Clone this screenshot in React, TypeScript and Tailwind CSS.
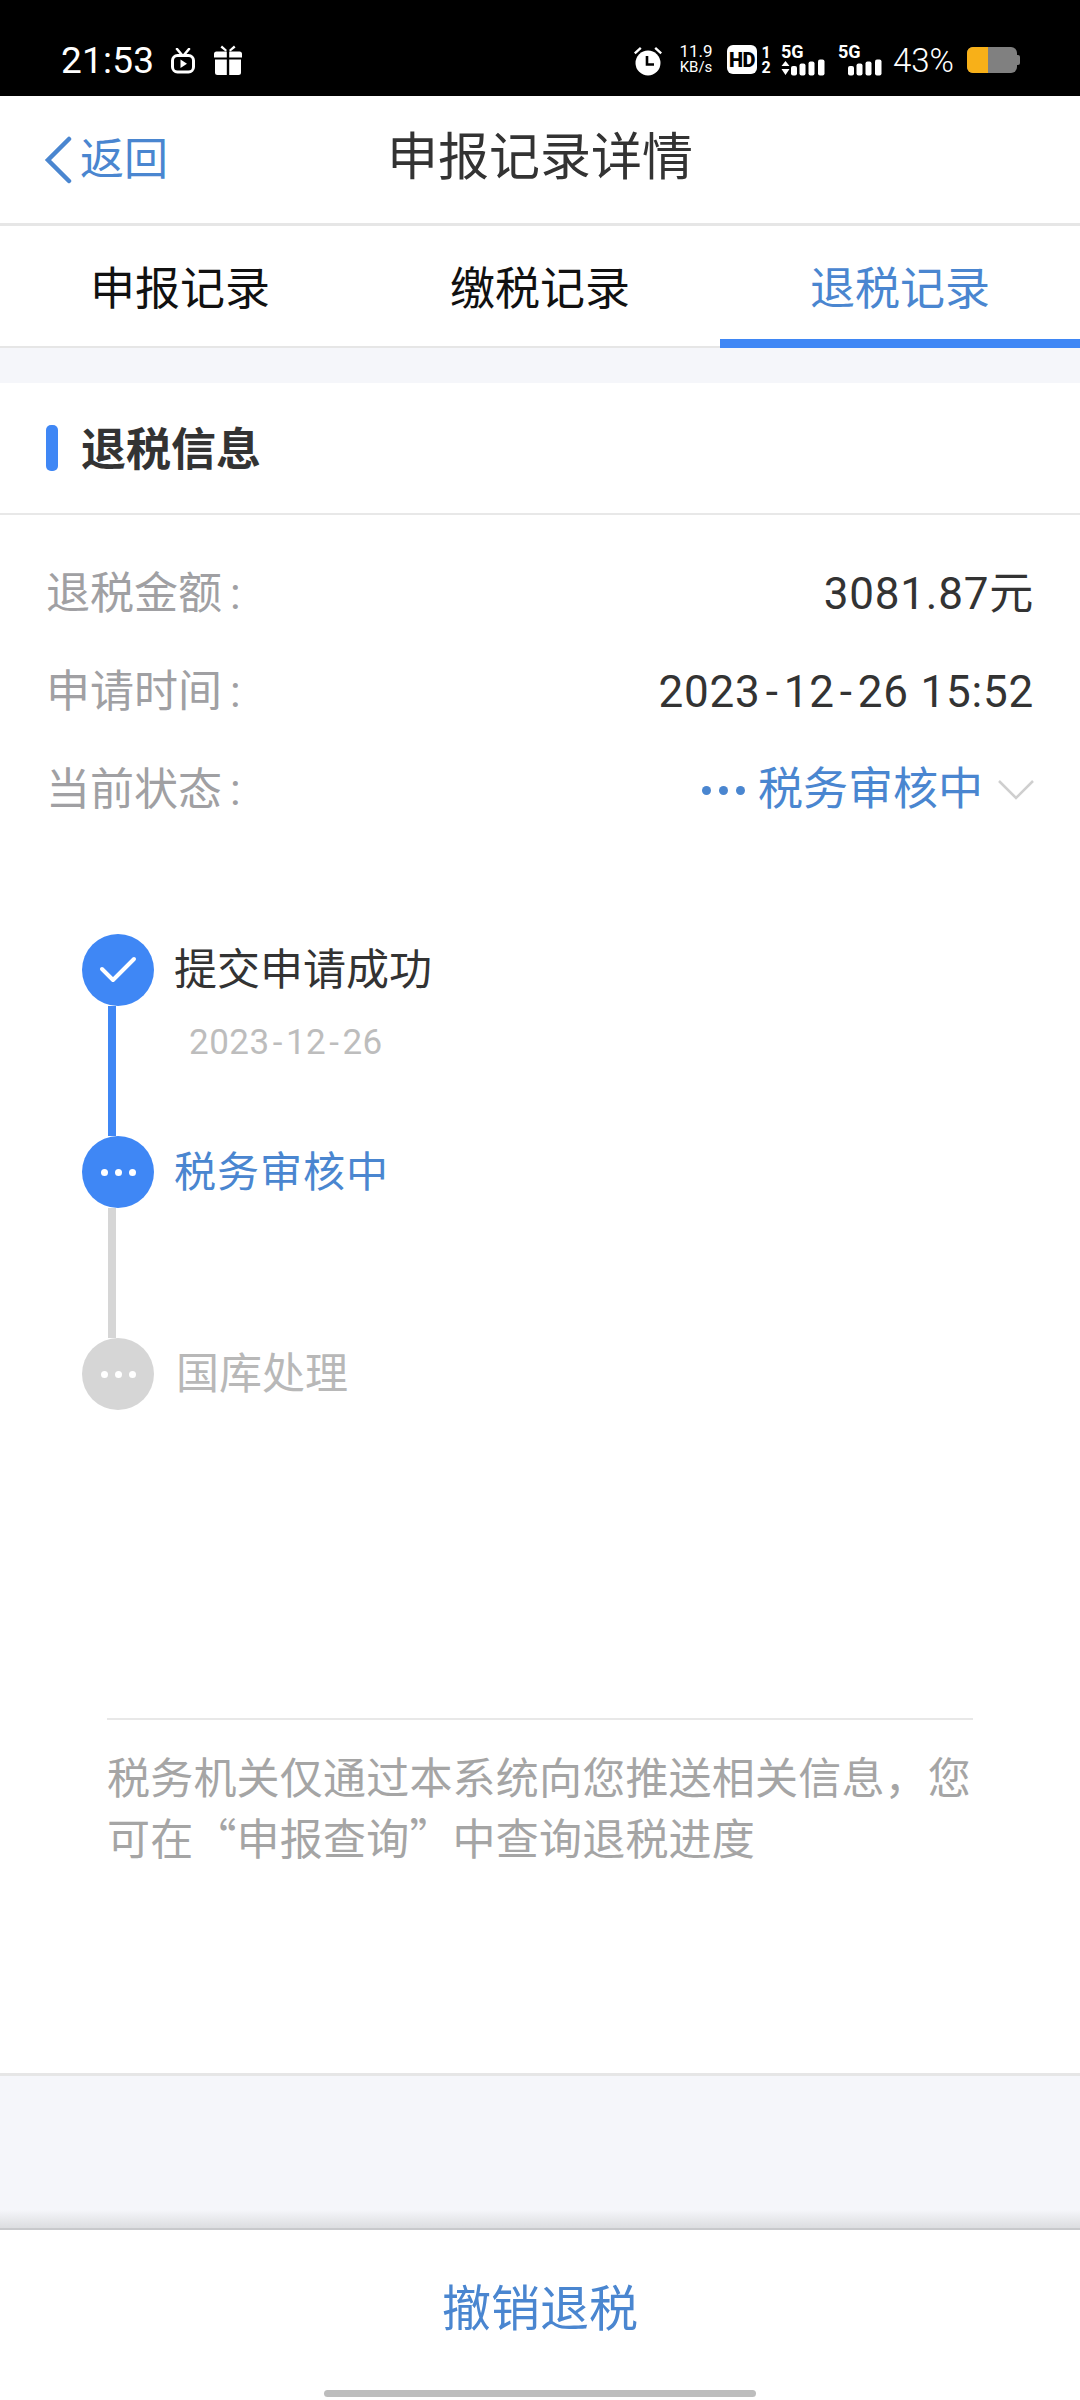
const FONT = "font-['Roboto','Noto_Sans_CJK_SC',sans-serif]";

function Signal({ arrows }: { arrows?: boolean }) {
  return (
    <svg width="44" height="17" viewBox="0 0 44 17" fill="white" className="block">
      {arrows && <path d="M0.5 7 L4.5 2 L8.5 7 Z M0.5 10 L8.5 10 L4.5 16 Z" />}
      <rect x="10" y="7" width="6" height="9.5" rx="2" />
      <rect x="18.5" y="4.5" width="6" height="12" rx="2" />
      <rect x="27.5" y="2.5" width="6" height="14" rx="2" />
      <rect x="37" y="0.5" width="6.5" height="16" rx="2" />
    </svg>
  );
}

function StatusBar() {
  return (
    <div className="h-[96px] bg-black flex text-white pl-[61px] pr-[60px] pt-[45px] shrink-0">
      <span className="text-[37px] leading-[31px] tracking-[0.2px] font-normal w-[110px]">21:53</span>
      <svg width="24" height="26" viewBox="0 0 24 26" className="mt-[3px]" fill="none" stroke="white">
        <path d="M6 1 L11 7 M18 1 L13 7" strokeWidth="2.6" strokeLinecap="round" />
        <rect x="1.5" y="7.5" width="21" height="16.5" rx="5" strokeWidth="3" />
        <path d="M9.5 11.5 L16 15.7 L9.5 20 Z" fill="white" stroke="none" />
      </svg>
      <svg width="30" height="30" viewBox="0 0 30 30" className="ml-[18px]" fill="white">
        <path d="M9 0.5 L14 5 L12.6 6.5 L7.5 2.5 Z M21 0.5 L16 5 L17.4 6.5 L22.5 2.5 Z" />
        <path d="M1 9 Q1 6.5 3.5 6.5 H13.8 V12.5 H1 Z M16.2 6.5 H26.5 Q29 6.5 29 9 V12.5 H16.2 Z" />
        <path d="M2 14.5 H13.8 V30 H4.5 Q2 30 2 27.5 Z M16.2 14.5 H28 V27.5 Q28 30 25.5 30 H16.2 Z" />
      </svg>
      <div className="flex-1" />
      <svg width="30" height="30" viewBox="0 0 30 30" className="mt-[1px]" fill="white">
        <path d="M1 6.5 L7 1 L8.6 2.8 L2.6 8.3 Z M29 6.5 L23 1 L21.4 2.8 L27.4 8.3 Z" />
        <circle cx="15" cy="17" r="12.5" />
        <path d="M14 10 V18.5 H21" fill="none" stroke="black" strokeWidth="2.6" />
      </svg>
      <div className="ml-[15px] w-[36px] flex flex-col items-center mt-[-2px]">
        <span className="text-[17px] leading-[17px]">11.9</span>
        <span className="text-[15px] leading-[15px]">KB/s</span>
      </div>
      <div className="ml-[13px] w-[30px] h-[29px] bg-white rounded-[6px] flex items-center justify-center text-black text-[20px] leading-none font-black tracking-[-0.5px]">HD</div>
      <div className="ml-[3px] w-[12px] flex flex-col items-center text-[16px] leading-[15px] font-bold">
        <span>1</span>
        <span>2</span>
      </div>
      <div className="ml-[9px] w-[46px] flex flex-col">
        <span className="text-[18px] leading-[14px] font-bold">5G</span>
        <Signal arrows />
      </div>
      <div className="ml-[11px] w-[46px] flex flex-col">
        <span className="text-[18px] leading-[14px] font-bold">5G</span>
        <Signal />
      </div>
      <span className="ml-[9px] w-[66px] text-[33px] leading-[32px] font-light">43%</span>
      <div className="ml-[8px] flex items-center h-[28px] mt-[1px]">
        <div className="w-[50px] h-[26px] rounded-[6px] bg-[#808080] overflow-hidden">
          <div className="w-[21px] h-full bg-[#f8b018]" />
        </div>
        <div className="w-[3px] h-[10px] bg-[#808080] rounded-r-[2px]" />
      </div>
    </div>
  );
}

function Nav() {
  return (
    <div className="relative h-[130px] flex items-center justify-center border-b-[3px] border-[#e6e6e6] shrink-0">
      <div className="absolute left-[44px] top-[40px] flex items-center">
        <svg width="28" height="48" viewBox="0 0 28 48" fill="none" stroke="#4a86d0" strokeWidth="4.5" strokeLinecap="round">
          <path d="M25 3 L4 24 L25 45" />
        </svg>
        <span className="ml-[8px] text-[#4a86d0] text-[44px] leading-[48px]">返回</span>
      </div>
      <span className="text-[#333] text-[51px] leading-[60px] mt-[-3px]">申报记录详情</span>
    </div>
  );
}

function Tabs() {
  const tabs = ["申报记录", "缴税记录", "退税记录"];
  return (
    <div className="h-[122px] grid grid-cols-3 border-b-2 border-[#e6e6e6] shrink-0">
      {tabs.map((t, i) => (
        <div
          key={t}
          className={
            i === 2
              ? "flex items-center justify-center text-[45px] text-[#4a86d0] border-b-[9px] border-[#3f87f5] mb-[-2px]"
              : "flex items-center justify-center text-[45px] text-[#111] border-b-[9px] border-transparent mb-[-2px]"
          }
        >
          <span className="mt-[14px]">{t}</span>
        </div>
      ))}
    </div>
  );
}

function Row({ label, children }: { label: string; children: React.ReactNode }) {
  return (
    <div className="h-[98px] flex items-center justify-between">
      <span className="text-[#a0a0a3] text-[44px]">
        {label}
        <span className="ml-[8px]">:</span>
      </span>
      {children}
    </div>
  );
}

function Dots({ className, gap }: { className: string; gap: string }) {
  return (
    <div className={gap}>
      <div className={className} />
      <div className={className} />
      <div className={className} />
    </div>
  );
}

function Hy() {
  return <span className="mx-[5px]">-</span>;
}

function HySmall() {
  return <span className="mx-[3px]">-</span>;
}

function Timeline() {
  return (
    <div className="mt-[95px] pl-[82px] flex flex-col">
      <div className="flex">
        <div className="w-[72px] flex flex-col shrink-0">
          <div className="w-[72px] h-[72px] rounded-full bg-[#3f87f5] flex items-center justify-center">
            <svg width="38" height="30" viewBox="0 0 38 30" fill="none" stroke="white" strokeWidth="4" strokeLinecap="round" strokeLinejoin="round">
              <path d="M3 14 L14 25 L35 4" />
            </svg>
          </div>
          <div className="ml-[26px] w-[8px] h-[130px] bg-[#3f87f5]" />
        </div>
        <div className="ml-[20px]">
          <div className="h-[72px] flex items-center text-[43px] text-[#333]">提交申请成功</div>
          <div className="ml-[15px] mt-[15px] text-[35px] leading-[44px] text-[#bdbdbd] tracking-[0.5px]">
            2023<HySmall />12<HySmall />26
          </div>
        </div>
      </div>
      <div className="flex">
        <div className="w-[72px] flex flex-col shrink-0">
          <div className="w-[72px] h-[72px] rounded-full bg-[#3f87f5] flex items-center justify-center">
            <Dots gap="flex gap-[7px]" className="w-[7px] h-[7px] rounded-full bg-white" />
          </div>
          <div className="ml-[26px] w-[8px] h-[130px] bg-[#d6d6d6]" />
        </div>
        <div className="ml-[20px] h-[72px] flex items-center text-[42px] text-[#4a86d0] tracking-[1px]">税务审核中</div>
      </div>
      <div className="flex">
        <div className="w-[72px] h-[72px] rounded-full bg-[#d6d6d6] flex items-center justify-center shrink-0">
          <Dots gap="flex gap-[7px]" className="w-[7px] h-[7px] rounded-full bg-white" />
        </div>
        <div className="ml-[22px] h-[72px] flex items-center text-[43px] text-[#b8b8b8]">国库处理</div>
      </div>
    </div>
  );
}

export default function App() {
  return (
    <div lang="zh-CN" className={`w-[1080px] h-[2400px] bg-white flex flex-col overflow-hidden ${FONT}`}>
      <StatusBar />
      <Nav />
      <Tabs />
      <div className="h-[35px] bg-[#f5f6fa] shrink-0" />
      <div className="h-[1693px] shrink-0 flex flex-col border-b-[3px] border-[#e6e6e6]">
        <div className="h-[132px] flex items-center pl-[46px] border-b-2 border-[#e8e8e8] shrink-0">
          <div className="w-[12px] h-[46px] rounded-[5px] bg-[#3f87f5]" />
          <span className="ml-[23px] mt-[6px] text-[45px] font-bold text-[#333]">退税信息</span>
        </div>
        <div className="mt-[30px] px-[46px] flex flex-col">
          <Row label="退税金额">
            <span className="text-[44px] text-[#333] tracking-[0.8px]">3081.87元</span>
          </Row>
          <Row label="申请时间">
            <span className="text-[44px] text-[#333] tracking-[0.8px]">
              2023<Hy />12<Hy />26 15:52
            </span>
          </Row>
          <Row label="当前状态">
            <div className="flex items-center">
              <Dots gap="flex gap-[8px]" className="w-[9px] h-[9px] rounded-full bg-[#4a86d0]" />
              <span className="ml-[13px] text-[45px] text-[#4a86d0]">税务审核中</span>
              <svg width="36" height="22" viewBox="0 0 36 22" fill="none" stroke="#cfcfcf" strokeWidth="2.5" className="ml-[15px]">
                <path d="M1 2 L18 19 L35 2" />
              </svg>
            </div>
          </Row>
        </div>
        <Timeline />
        <div className="mt-[308px] mx-[107px] border-t-2 border-[#e8e8e8] pt-[25px] text-[43px] leading-[61px] tracking-[0.2px] text-[#a5a5a5] w-[866px] font-['Noto_Sans_CJK_SC',sans-serif]">
          税务机关仅通过本系统向您推送相关信息，您可在“申报查询”中查询退税进度
        </div>
      </div>
      <div className="flex-1 bg-[#f5f6fa] flex flex-col justify-end">
        <div className="h-[18px] bg-gradient-to-b from-transparent to-[#dcdde0]" />
      </div>
      <div className="relative h-[172px] bg-white border-t-2 border-[#c8c9cc] flex justify-center shrink-0">
        <span className="mt-[50px] text-[49px] leading-[60px] text-[#4a86d0]">撤销退税</span>
        <div className="absolute bottom-[3px] left-[324px] w-[432px] h-[7px] rounded-full bg-[#bdbdbd]" />
      </div>
    </div>
  );
}
